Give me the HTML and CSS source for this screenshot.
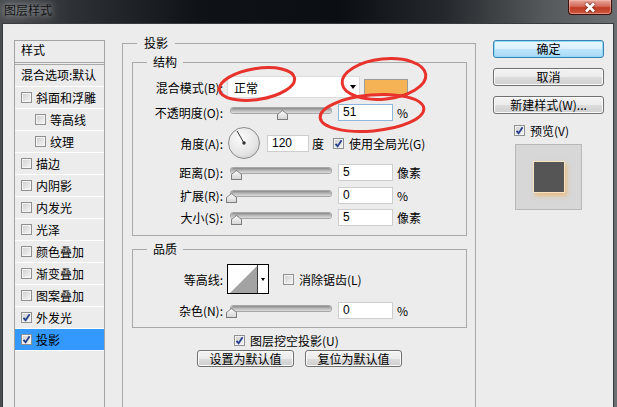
FILE: index.html
```html
<!DOCTYPE html>
<html lang="zh-CN">
<head>
    <meta charset="UTF-8">
    <title>图层样式</title>
    <link rel="stylesheet" href="styles.css">
</head>
<body>
<div class="window">
    <div class="titlebar">
        <span class="title">图层样式</span>
        <span class="close-btn">
            <svg width="14" height="11" viewBox="0 0 14 11"><path d="M3 1.5 L11 9.5 M11 1.5 L3 9.5"/></svg>
        </span>
    </div>

    <div class="dialog">
        <!-- effects list -->
        <ul class="style-list">
            <li class="list-head">样式</li>
            <li class="blend">混合选项:默认</li>
            <li><span class="cb"></span>斜面和浮雕</li>
            <li class="sub"><span class="cb"></span>等高线</li>
            <li class="sub"><span class="cb"></span>纹理</li>
            <li><span class="cb"></span>描边</li>
            <li><span class="cb"></span>内阴影</li>
            <li><span class="cb"></span>内发光</li>
            <li><span class="cb"></span>光泽</li>
            <li><span class="cb"></span>颜色叠加</li>
            <li><span class="cb"></span>渐变叠加</li>
            <li><span class="cb"></span>图案叠加</li>
            <li><span class="cb"><svg viewBox="0 0 9 9"><path d="M1.5 4.8 L3.6 7.3 L7.6 1.2"/></svg></span>外发光</li>
            <li class="active"><span class="cb"><svg viewBox="0 0 9 9"><path d="M1.5 4.8 L3.6 7.3 L7.6 1.2"/></svg></span>投影</li>
        </ul>

        <!-- drop shadow settings -->
        <fieldset class="effect">
            <legend>投影</legend>

            <fieldset class="group structure">
                <legend>结构</legend>
                <div class="row row-blend">
                    <span class="label">混合模式(B):</span>
                    <div class="select">正常<span class="arrow"></span></div>
                    <span class="swatch"></span>
                </div>
                <div class="row row-opacity">
                    <span class="label">不透明度(O):</span>
                    <div class="slider"><div class="track"><span class="thumb" style="left:51%"></span></div></div>
                    <input class="num focus" type="text" value="51">
                    <span class="unit">%</span>
                </div>
                <div class="row row-angle">
                    <span class="label">角度(A):</span>
                    <svg class="dial" width="32" height="32" viewBox="0 0 32 32">
                        <defs>
                            <radialGradient id="dialFill" cx="0.4" cy="0.35" r="0.7">
                                <stop offset="0" stop-color="#fbfbfb"/>
                                <stop offset="0.7" stop-color="#e6e6e6"/>
                                <stop offset="1" stop-color="#d2d2d2"/>
                            </radialGradient>
                        </defs>
                        <circle cx="16" cy="16" r="15.5" fill="url(#dialFill)" stroke="#8c8c8c"/>
                        <line x1="16" y1="16" x2="9" y2="3.9" stroke="#333" stroke-width="1"/>
                        <circle cx="16" cy="16" r="1.7" fill="#333"/>
                    </svg>
                    <input class="num angle" type="text" value="120">
                    <span class="unit deg">度</span>
                    <span class="cb global"><svg viewBox="0 0 9 9"><path d="M1.5 4.8 L3.6 7.3 L7.6 1.2"/></svg></span>
                    <span class="cb-text">使用全局光(G)</span>
                </div>
                <div class="row row-distance">
                    <span class="label">距离(D):</span>
                    <div class="slider"><div class="track"><span class="thumb" style="left:5%"></span></div></div>
                    <input class="num" type="text" value="5">
                    <span class="unit">像素</span>
                </div>
                <div class="row row-spread">
                    <span class="label">扩展(R):</span>
                    <div class="slider"><div class="track"><span class="thumb" style="left:0%"></span></div></div>
                    <input class="num" type="text" value="0">
                    <span class="unit">%</span>
                </div>
                <div class="row row-size">
                    <span class="label">大小(S):</span>
                    <div class="slider"><div class="track"><span class="thumb" style="left:5%"></span></div></div>
                    <input class="num" type="text" value="5">
                    <span class="unit">像素</span>
                </div>
            </fieldset>

            <fieldset class="group quality">
                <legend>品质</legend>
                <div class="row row-contour">
                    <span class="label">等高线:</span>
                    <div class="contour">
                        <svg width="29" height="28" viewBox="0 0 29 28"><path d="M2 28 L29 1 V28 Z" fill="#a3a3a3"/></svg>
                        <span class="contour-drop"><span class="arrow small"></span></span>
                    </div>
                    <span class="cb aa"></span>
                    <span class="cb-text">消除锯齿(L)</span>
                </div>
                <div class="row row-noise">
                    <span class="label">杂色(N):</span>
                    <div class="slider"><div class="track"><span class="thumb" style="left:0%"></span></div></div>
                    <input class="num" type="text" value="0">
                    <span class="unit">%</span>
                </div>
            </fieldset>

            <div class="knockout">
                <span class="cb"><svg viewBox="0 0 9 9"><path d="M1.5 4.8 L3.6 7.3 L7.6 1.2"/></svg></span>
                <span class="cb-text">图层挖空投影(U)</span>
            </div>
            <div class="defaults">
                <button class="btn">设置为默认值</button>
                <button class="btn">复位为默认值</button>
            </div>
        </fieldset>

        <!-- dialog buttons and preview -->
        <div class="side">
            <button class="btn primary">确定</button>
            <button class="btn">取消</button>
            <button class="btn">新建样式(W)...</button>
            <div class="preview-toggle">
                <span class="cb"><svg viewBox="0 0 9 9"><path d="M1.5 4.8 L3.6 7.3 L7.6 1.2"/></svg></span>
                <span class="cb-text">预览(V)</span>
            </div>
            <div class="preview">
                <span class="preview-square"></span>
            </div>
        </div>
    </div>

    <!-- red annotation marks -->
    <svg class="marks" width="617" height="407" viewBox="0 0 617 407">
        <ellipse cx="257" cy="84" rx="38" ry="15.5" transform="rotate(-9 257 84)"/>
        <ellipse cx="384" cy="79" rx="42" ry="20" transform="rotate(-6 384 79)"/>
        <ellipse cx="372" cy="113" rx="52" ry="18" transform="rotate(-5 372 113)"/>
    </svg>
</div>
</body>
</html>
```

FILE: styles.css
```css
* {
    box-sizing: border-box;
}

body {
    margin: 0;
    font-family: "Noto Sans CJK SC", "Noto Sans", sans-serif;
    font-size: 12px;
    color: #000;
    background: #1d2024;
    overflow: hidden;
}

.window {
    position: relative;
    width: 617px;
    height: 407px;
    overflow: hidden;
    background: linear-gradient(90deg, #4b4e51 0%, #2d3034 12%, #0f1216 32%, #0b0e12 55%, #25282c 72%, #55585b 88%, #6c6f72 100%);
}

/* title bar */
.titlebar {
    height: 23px;
    display: flex;
    align-items: flex-start;
    padding: 0 5px 0 4px;
}

.title {
    margin-top: 3px;
    line-height: 14px;
    color: #141414;
    text-shadow: 0 0 6px rgba(190, 194, 198, 0.9), 0 0 12px rgba(160, 164, 168, 0.8);
}

.close-btn {
    margin-left: auto;
    width: 44px;
    height: 15px;
    border: 1px solid #3d100a;
    border-top: none;
    border-radius: 0 0 4px 4px;
    background: linear-gradient(#e7a79b 0%, #d46a5a 45%, #c13a25 55%, #cc5a40 100%);
    box-shadow: inset 0 0 0 1px rgba(255, 200, 190, 0.5);
    display: flex;
    align-items: center;
    justify-content: center;
}

.close-btn svg {
    stroke: #fff;
    stroke-width: 2.6;
    fill: none;
    filter: drop-shadow(0 0 1px #5a1208);
}

/* dialog body */
.dialog {
    height: 384px;
    margin: 0 3px 0 2px;
    border: 1px solid #383b3e;
    border-bottom: none;
    background: #ececec;
    display: flex;
    align-items: flex-start;
    padding: 12px 0 0 11px;
}

/* left list */
.style-list {
    list-style: none;
    margin: 4px 0 0;
    padding: 0;
    width: 91px;
    height: 380px;
    flex: none;
    border: 1px solid #a3a3a3;
}

.style-list li {
    height: 22px;
    border-bottom: 1px solid #fff;
    display: flex;
    align-items: center;
    padding-left: 6px;
    white-space: nowrap;
    overflow: hidden;
}

.style-list .list-head {
    height: 24px;
    border-bottom: 3px double #a8a8a8;
    padding-bottom: 4px;
}

.style-list .blend {
    padding-bottom: 3px;
}

.style-list .sub {
    padding-left: 20px;
}

.style-list .active {
    background: #3399ff;
}

.style-list .cb {
    margin-right: 4px;
}

/* checkbox */
.cb {
    width: 11px;
    height: 11px;
    flex: none;
    border: 1px solid #8e8f8f;
    background: linear-gradient(135deg, #cdcdcd, #f7f7f7);
    box-shadow: inset 0 0 0 1px #f4f4f4;
    display: flex;
    align-items: center;
    justify-content: center;
}

.cb svg {
    width: 9px;
    height: 9px;
    fill: none;
    stroke: #25408f;
    stroke-width: 1.8;
}

.cb-text {
    margin-left: 5px;
    white-space: nowrap;
}

/* group boxes */
fieldset {
    margin: 0;
    min-width: 0;
}

.effect {
    margin-left: 17px;
    padding: 0 8px 0 9px;
    width: 354px;
    height: 380px;
    flex: none;
    border: 1px solid #a9a9a9;
}

.effect > legend {
    margin-left: 5px;
    padding: 0 7px;
    line-height: 14px;
}

.group {
    margin-top: 5px;
    padding: 0 0 7px;
    width: 335px;
    border: 1px solid #a9a9a9;
}

.group > legend {
    margin-left: 14px;
    padding: 0 6px;
    line-height: 14px;
}

.quality {
    margin-top: 6px;
    padding-bottom: 6px;
}

/* rows */
.row {
    display: flex;
    align-items: center;
    height: 22px;
}

.label {
    width: 90px;
    flex: none;
    text-align: right;
    white-space: nowrap;
}

.row-blend {
    height: 24px;
    margin-top: 6px;
}

.row-opacity {
    margin-top: 2px;
}

.row-angle {
    height: 34px;
    margin-top: 3px;
}

.row-distance,
.row-spread {
    margin-top: 1px;
}

.row-contour {
    height: 30px;
    margin-top: 8px;
}

.row-noise {
    margin-top: 5px;
}

.select {
    margin-left: 4px;
    width: 133px;
    height: 22px;
    background: #fff;
    border: 1px solid #dcdcdc;
    display: flex;
    align-items: center;
    padding-left: 6px;
}

.arrow {
    margin-left: auto;
    margin-right: 3px;
    width: 0;
    height: 0;
    border-top: 4px solid #000;
    border-left: 3.5px solid transparent;
    border-right: 3.5px solid transparent;
}

.swatch {
    margin-left: 4px;
    width: 44px;
    height: 17px;
    border: 1px solid #9c9c9c;
    background: #f5b355;
}

/* slider */
.slider {
    margin-left: 4px;
    width: 107px;
    padding: 0 3px 0 4px;
    flex: none;
}

.track {
    position: relative;
    height: 5px;
    margin-bottom: 3px;
    border-radius: 3px;
    background: linear-gradient(#8a8a8a, #b9b9b9 50%, #dcdcdc);
    box-shadow: 0 0 0 1px #a6a6a6;
}

.thumb {
    position: absolute;
    top: 2px;
    width: 11px;
    height: 10px;
    margin-left: -5px;
    background: linear-gradient(#f4f4f4, #c9c9c9);
    clip-path: polygon(50% 0, 100% 45%, 100% 100%, 0 100%, 0 45%);
}

.thumb::after {
    content: "";
    position: absolute;
    inset: 1px;
    background: linear-gradient(#fbfbfb, #d6d6d6);
    clip-path: polygon(50% 0, 100% 45%, 100% 100%, 0 100%, 0 45%);
}

.thumb {
    background: #7c7c7c;
}

/* inputs */
.num {
    margin: 0 0 0 4px;
    width: 55px;
    height: 17px;
    border: 1px solid #cdcdcd;
    background: #fff;
    padding: 0 0 0 4px;
    font-family: "Liberation Sans", sans-serif;
    font-size: 12px;
    color: #000;
    outline: none;
}

.num.focus {
    border-color: #8fb6db;
}

.num.angle {
    margin-left: 7px;
    width: 42px;
}

.unit {
    margin-left: 4px;
    white-space: nowrap;
}

.unit.deg {
    margin-left: 3px;
}

.cb.global {
    margin-left: 9px;
}

.dial {
    margin-left: 5px;
    flex: none;
}

/* contour picker */
.contour {
    margin-left: 4px;
    width: 42px;
    height: 30px;
    border: 1px solid #000;
    background: #fff;
    display: flex;
}

.contour svg {
    display: block;
}

.contour-drop {
    flex: 1;
    border-left: 1px solid #3a3a3a;
    display: flex;
    align-items: center;
}

.arrow.small {
    margin: 0 auto;
    border-top-width: 3px;
    border-left-width: 2.5px;
    border-right-width: 2.5px;
}

.cb.aa {
    margin-left: 14px;
}

.knockout {
    margin-top: 5px;
    height: 14px;
    padding-left: 102px;
    display: flex;
    align-items: center;
}

.defaults {
    margin-top: 3px;
    display: flex;
    justify-content: center;
    gap: 11px;
}

/* buttons */
.btn {
    height: 17px;
    width: 97px;
    padding: 0;
    border: 1px solid #707070;
    border-radius: 3px;
    background: linear-gradient(#f3f3f3 0%, #ebebeb 50%, #dddddd 50%, #cfcfcf 100%);
    box-shadow: inset 0 0 0 1px #fbfbfb;
    font-family: "Noto Sans CJK SC", "Noto Sans", sans-serif;
    font-size: 12px;
    line-height: 14px;
    color: #000;
}

.side {
    margin: 4px 0 0 17px;
    width: 111px;
    flex: none;
    display: flex;
    flex-direction: column;
}

.side .btn {
    width: 111px;
    height: 18px;
    margin-bottom: 10px;
}

.btn.primary {
    border-color: #3c7fb1;
    background: linear-gradient(#eaf6fd 0%, #d9f0fc 50%, #bee6fd 50%, #a7d9f5 100%);
    box-shadow: inset 0 0 0 1px #8fdcf8;
}

.preview-toggle {
    margin-top: 0;
    height: 12px;
    padding-left: 21px;
    display: flex;
    align-items: center;
}

.preview {
    margin: 8px 0 0 22px;
    width: 67px;
    height: 66px;
    border: 1px solid #b8b8b8;
    background: #d7d7d7;
    display: flex;
    align-items: center;
    justify-content: center;
}

.preview-square {
    width: 32px;
    height: 32px;
    background: #555;
    border: 1px solid #f6e2bf;
    box-shadow: 2px 3px 4px rgba(245, 172, 70, 0.55);
}

/* annotation overlay */
.marks {
    position: absolute;
    left: 0;
    top: 0;
    pointer-events: none;
    fill: none;
    stroke: #e8322c;
    stroke-width: 3;
}
```
